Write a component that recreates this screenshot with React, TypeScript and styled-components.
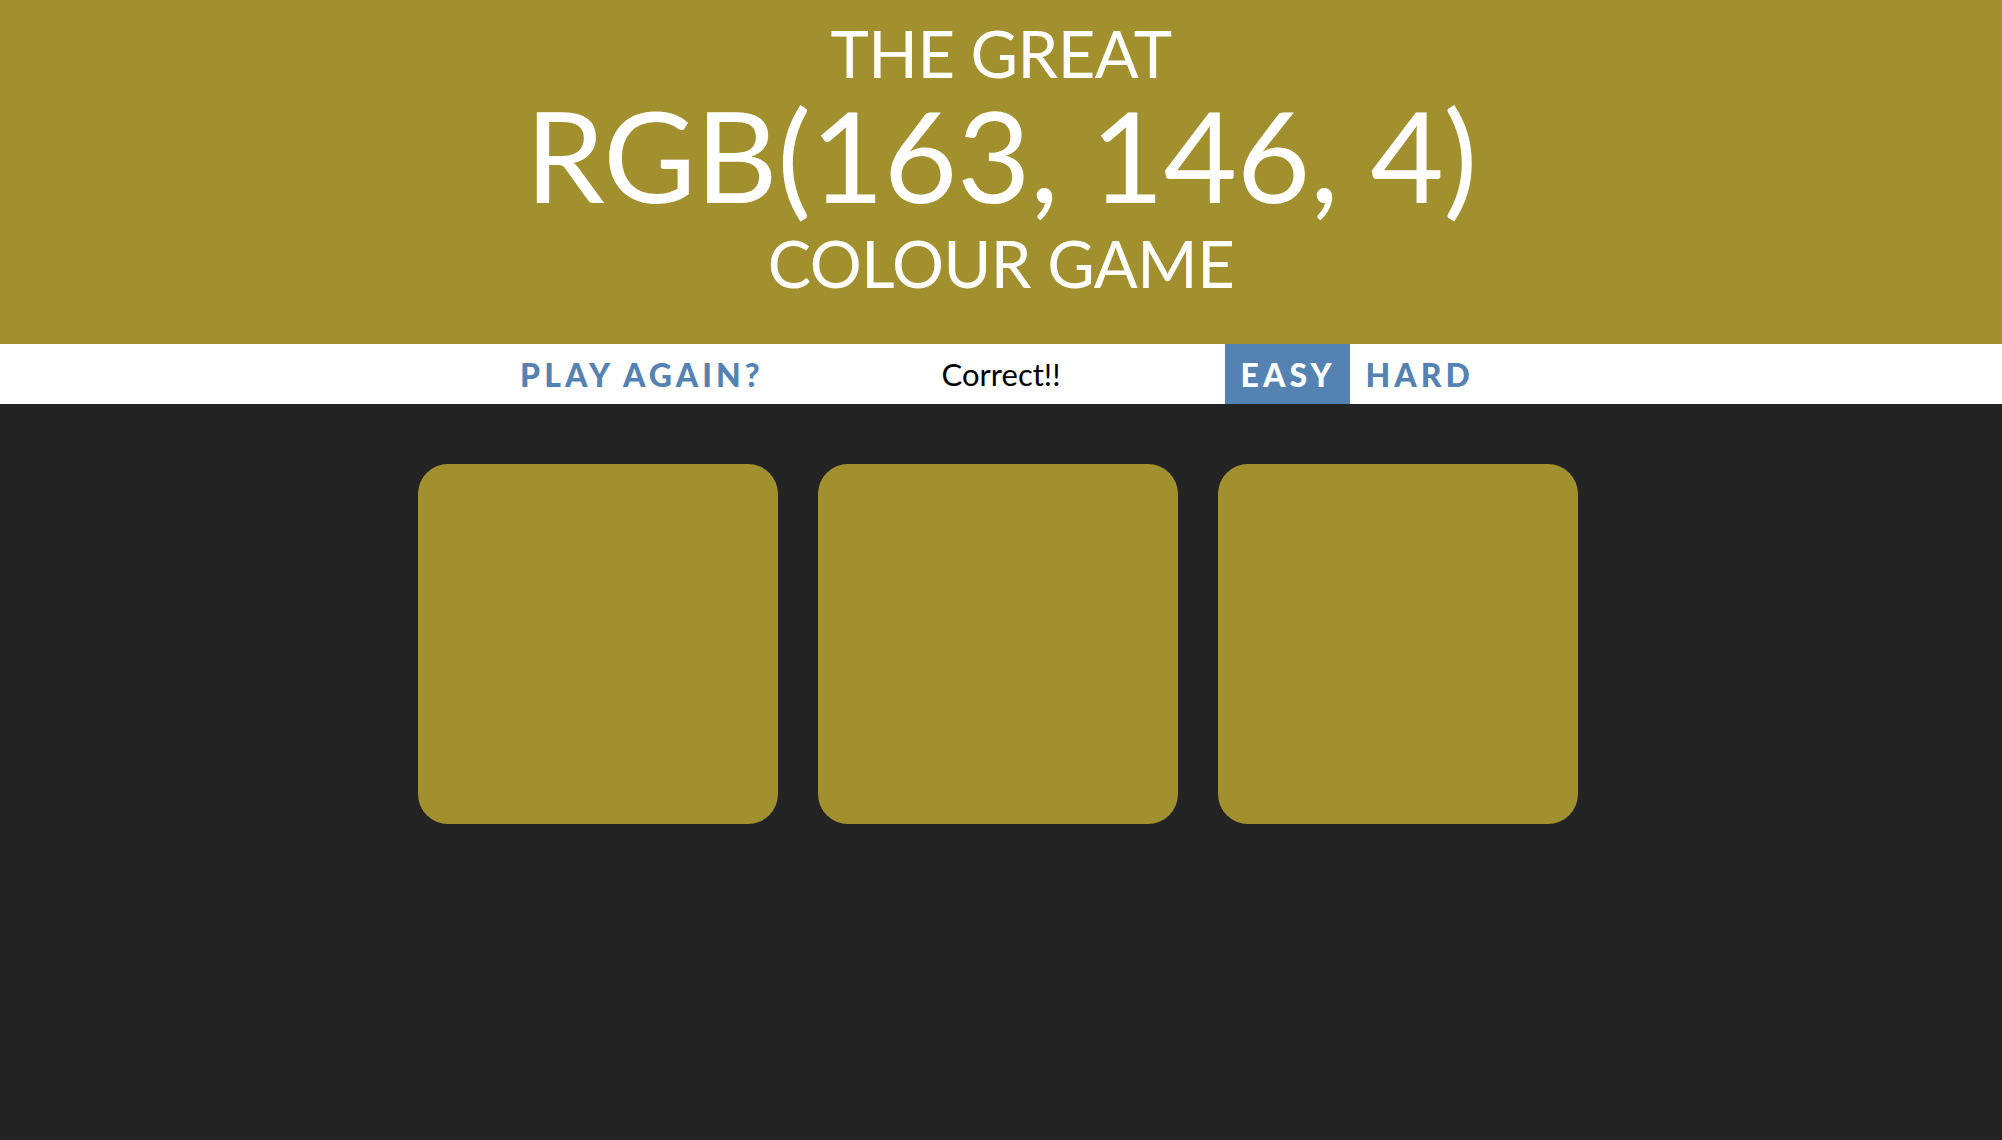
import styled, { createGlobalStyle } from 'styled-components';

const GlobalStyle = createGlobalStyle`
  html, body {
    margin: 0;
    padding: 0;
    background: #232323;
    font-family: Lato, "Open Sans", sans-serif;
  }
`;

const GOAL = 'rgb(162, 144, 47)';
const ACCENT = '#5482b2';

const Header = styled.h1`
  margin: 0;
  padding: 13px 0 33px;
  background: ${GOAL};
  color: #fff;
  text-align: center;
  font-weight: 400;
  text-transform: uppercase;
`;

const Line = styled.span<{ $size: number; $height: number }>`
  display: block;
  font-size: ${(p) => p.$size}px;
  line-height: ${(p) => p.$height}px;
  height: ${(p) => p.$height}px;
  letter-spacing: -0.5px;
  white-space: nowrap;
`;

const Stripe = styled.nav`
  display: flex;
  justify-content: center;
  align-items: stretch;
  height: 60px;
  padding-right: 10px;
  background: #fff;
`;

const Button = styled.button<{ $active?: boolean }>`
  border: none;
  margin: 0;
  padding: 0 14px 0 16px;
  background: ${(p) => (p.$active ? ACCENT : '#fff')};
  color: ${(p) => (p.$active ? '#fff' : ACCENT)};
  font-family: Lato, sans-serif;
  font-weight: 900;
  font-size: 32px;
  letter-spacing: 4px;
  text-transform: uppercase;
  cursor: pointer;
`;

const Message = styled.span`
  display: flex;
  align-items: center;
  justify-content: center;
  width: 447px;
  color: #000;
  font-size: 31px;
`;

const Board = styled.main`
  display: grid;
  grid-template-columns: repeat(3, 360px);
  gap: 40px;
  justify-content: center;
  padding: 60px 6px 0 0;
`;

const Square = styled.div<{ $colour: string }>`
  width: 360px;
  height: 360px;
  border-radius: 30px;
  background: ${(p) => p.$colour};
`;

const squares = [GOAL, GOAL, GOAL];

export default function App() {
  return (
    <>
      <GlobalStyle />
      <Header>
        <Line $size={65} $height={80}>The Great</Line>
        <Line $size={127} $height={122}>RGB(163, 146, 4)</Line>
        <Line $size={65} $height={96}>Colour Game</Line>
      </Header>
      <Stripe>
        <Button>Play again?</Button>
        <Message>Correct!!</Message>
        <Button $active>Easy</Button>
        <Button>Hard</Button>
      </Stripe>
      <Board>
        {squares.map((c, i) => (
          <Square key={i} $colour={c} />
        ))}
      </Board>
    </>
  );
}
